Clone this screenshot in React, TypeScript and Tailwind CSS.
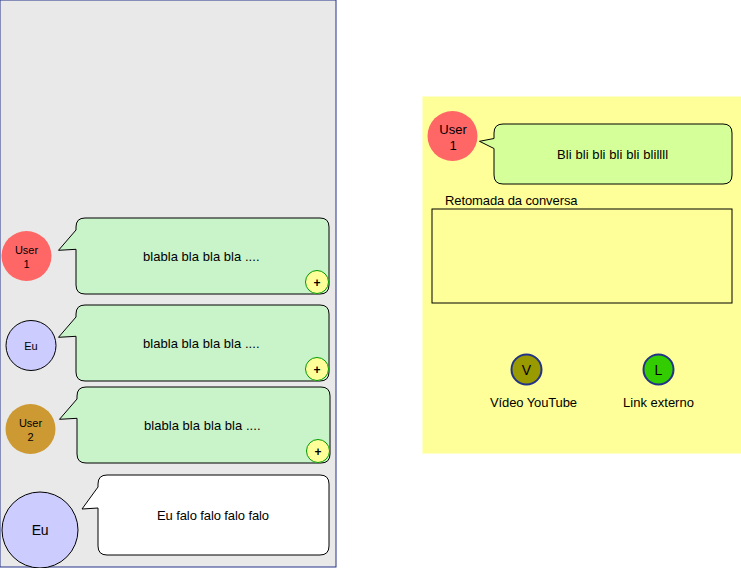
import React from "react";

type CircleProps = {
  className: string;
  size: number;
  cx: number;
  cy: number;
  r: number;
  fill: string;
  stroke?: string;
  strokeWidth?: number;
  children: React.ReactNode;
};

function Circle({ className, size, cx, cy, r, fill, stroke = "none", strokeWidth = 1, children }: CircleProps) {
  return (
    <div className={`relative shrink-0 flex flex-col items-center ${className}`}>
      <svg className="absolute left-0 top-0" width={size} height={size}>
        <circle cx={cx} cy={cy} r={r} fill={fill} stroke={stroke} strokeWidth={strokeWidth} />
      </svg>
      {children}
    </div>
  );
}

/* Hairline frame centred on the pixel grid, like the bubbles' outlines. */
function Frame({ w, h, stroke }: { w: number; h: number; stroke: string }) {
  return (
    <svg className="absolute left-0 top-0 overflow-visible" width={w} height={h}>
      <rect width={w} height={h} fill="none" stroke={stroke} />
    </svg>
  );
}

type BubbleProps = {
  className: string;
  tail: number;
  tip: number;
  from: number;
  to: number;
  w: number;
  h: number;
  fill: string;
  children: React.ReactNode;
};

/* Rounded speech bubble whose tail points left, at a given height. */
function Bubble({ className, tail, tip, from, to, w, h, fill, children }: BubbleProps) {
  const r = 9;
  const d = `M${r} 0H${w - r}Q${w} 0 ${w} ${r}V${h - r}Q${w} ${h} ${w - r} ${h}H${r}Q0 ${h} 0 ${h - r}V${to}L${-tail} ${tip}L0 ${from}V${r}Q0 0 ${r} 0Z`;
  return (
    <div className={`relative shrink-0 ${className}`}>
      <svg className="absolute left-0 top-0 overflow-visible" width={w} height={h}>
        <path d={d} fill={fill} stroke="#000" strokeWidth={1} />
      </svg>
      {children}
    </div>
  );
}

function GreenBubble({ className }: { className: string }) {
  return (
    <Bubble className={`h-[76px] w-[253px] ${className}`} tail={17.5} tip={32.3} from={12} to={31.3} w={253} h={76} fill="#c9f3c9">
      <p className="relative pl-[67px] pt-[31px] text-[13px] leading-4 tracking-[0.04px] whitespace-nowrap">blabla bla bla bla ....</p>
      <div className="absolute left-[229px] top-[52px] h-6 w-6">
        <svg className="absolute left-0 top-0" width="24" height="24">
          <circle cx="12" cy="12" r="11.5" fill="#ffff99" stroke="#009900" />
        </svg>
        <p className="relative pt-[5px] text-center text-[12px] font-bold leading-4">+</p>
      </div>
    </Bubble>
  );
}

function SmallName({ children }: { children: React.ReactNode }) {
  return <p className="relative text-[11px] leading-[14px]">{children}</p>;
}

function Conversation() {
  return (
    <section className="relative flex h-[568px] w-[337px] shrink-0 flex-col overflow-hidden pl-px pt-[218px]">
      <div className="absolute left-0 top-0 h-[567px] w-[336px] bg-[#e9e9e9]">
        <Frame w={336} h={567} stroke="#223388" />
      </div>
      <div className="relative flex h-[87px] items-start">
        <Circle className="mt-[12px] h-[52px] w-[51px] pt-[13px]" size={52} cx={25.5} cy={26} r={25} fill="#ff6666">
          <SmallName>User</SmallName>
          <SmallName>1</SmallName>
        </Circle>
        <GreenBubble className="ml-[24px]" />
      </div>
      <div className="relative flex h-[82px] items-start">
        <Circle className="ml-[4px] mt-[14px] h-[52px] w-[52px] pt-[20px]" size={52} cx={26} cy={26.5} r={25} fill="#ccccff" stroke="#000">
          <SmallName>Eu</SmallName>
        </Circle>
        <GreenBubble className="ml-[19px]" />
      </div>
      <div className="relative flex h-[88px] items-start">
        <Circle className="ml-[4px] mt-[16px] h-[52px] w-[51px] pt-[13px]" size={52} cx={25.5} cy={26} r={25} fill="#cc9933">
          <SmallName>User</SmallName>
          <SmallName>2</SmallName>
        </Circle>
        <GreenBubble className="ml-[21px]" />
      </div>
      <div className="relative flex h-[93px] items-start">
        <Circle className="mt-[16px] h-[78px] w-[78px] pt-[31px]" size={78} cx={39} cy={39} r={38} fill="#ccccff" stroke="#000">
          <p className="relative text-[14px] leading-4 tracking-[-0.3px]">Eu</p>
        </Circle>
        <Bubble className="ml-[19px] h-[80px] w-[231px]" tail={16} tip={34} from={12} to={33} w={231} h={80} fill="#fff">
          <p className="relative pl-[59px] pt-[33px] text-[13px] leading-4 tracking-[-0.1px] whitespace-nowrap">Eu falo falo falo falo</p>
        </Bubble>
      </div>
    </section>
  );
}

type LinkButtonProps = { letter: string; label: string; fill: string; className: string; labelClass: string };

function LinkButton({ letter, label, fill, className, labelClass }: LinkButtonProps) {
  return (
    <div className={`flex flex-col items-center ${className}`}>
      <Circle className="h-[33px] w-[33px] pt-[9px]" size={33} cx={16.5} cy={16.5} r={15} fill={fill} stroke="#223388" strokeWidth={2}>
        <p className="relative text-[14px] leading-4">{letter}</p>
      </Circle>
      <p className={`mt-[9px] text-[13px] leading-4 whitespace-nowrap ${labelClass}`}>{label}</p>
    </div>
  );
}

function Detail() {
  return (
    <section className="mt-[96px] flex h-[358px] w-[319px] shrink-0 flex-col border-y border-l border-[#ffffcc] bg-[#ffff99]">
      <div className="flex h-[96px] items-start">
        <Circle className="ml-[4px] mt-[13px] h-[52px] w-[52px] pt-[12px]" size={52} cx={25.5} cy={26} r={25} fill="#ff6666">
          <p className="relative text-[13px] leading-4">User</p>
          <p className="relative text-[13px] leading-4">1</p>
        </Circle>
        <Bubble className="ml-[15px] mt-[27px] h-[60px] w-[238px]" tail={14.5} tip={17.3} from={14.5} to={24.5} w={238} h={60} fill="#d5ff99">
          <p className="relative pl-[63px] pt-[23px] text-[13px] leading-4 tracking-[0.08px] whitespace-nowrap">Bli bli bli bli bli blillll</p>
        </Bubble>
      </div>
      <p className="pl-[22px] text-[13px] leading-4 tracking-[-0.1px]">Retomada da conversa</p>
      <div className="relative ml-[9px] h-[94px] w-[300px]">
        <Frame w={300} h={94} stroke="#000" />
      </div>
      <div className="mt-[50px] flex">
        <LinkButton className="ml-[53px] w-[101px]" letter="V" label="Vídeo YouTube" fill="#999900" labelClass="pl-[14px] tracking-[-0.12px]" />
        <LinkButton className="ml-[38px] w-[87px]" letter="L" label="Link externo" fill="#33cc00" labelClass="" />
      </div>
    </section>
  );
}

export default function App() {
  return (
    <main className="flex h-[568px] w-[741px] items-start gap-[85px] overflow-hidden bg-white font-['Liberation_Sans',Arial,sans-serif] text-black">
      <Conversation />
      <Detail />
    </main>
  );
}
